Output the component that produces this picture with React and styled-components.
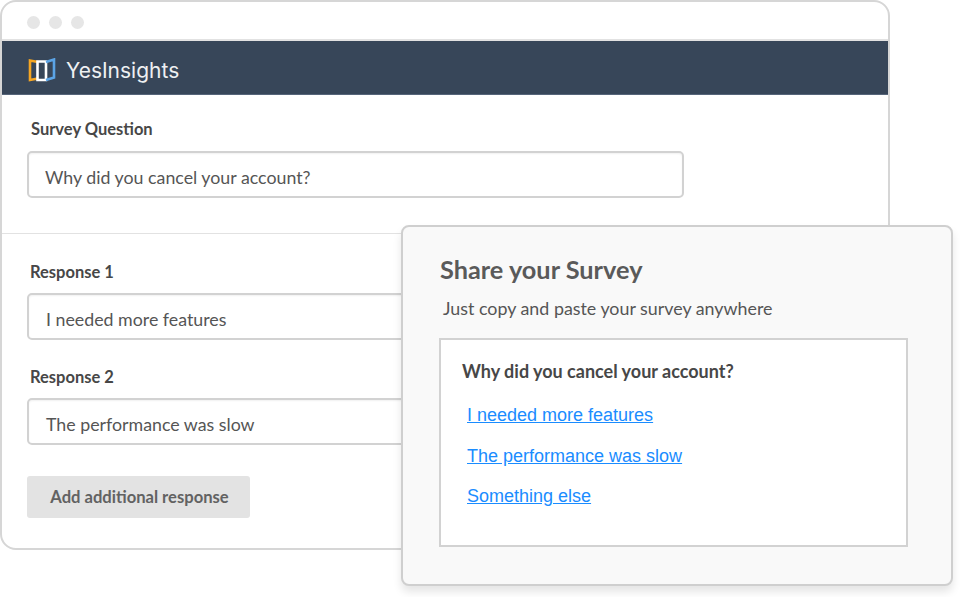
import React from 'react';
import styled, { createGlobalStyle } from 'styled-components';

const GlobalStyle = createGlobalStyle`
  html, body {
    margin: 0;
    padding: 0;
    background: #fff;
  }

  * {
    box-sizing: border-box;
  }
`;

const Page = styled.div`
  position: relative;
  width: 960px;
  height: 597px;
  overflow: hidden;
  font-family: Lato, "Liberation Sans", sans-serif;
  color: #444;
`;

const AppWindow = styled.div`
  width: 890px;
  height: 550px;
  border: 2px solid #d6d6d6;
  border-radius: 16px;
  background: #fff;
  overflow: hidden;
`;

const TitleBar = styled.div`
  display: flex;
  align-items: center;
  gap: 9px;
  height: 39px;
  padding: 3px 0 0 25px;
  border-bottom: 2px solid #e2e2e2;
`;

const Dot = styled.span`
  width: 13px;
  height: 13px;
  border-radius: 50%;
  background: #e6e6e6;
`;

const Brand = styled.div`
  display: flex;
  align-items: center;
  gap: 10px;
  height: 54px;
  padding: 5px 0 0 26px;
  background: #374659;
  border-bottom: 1px solid #56657a;
`;

const BrandName = styled.span`
  font-family: Inter, sans-serif;
  font-size: 21px;
  font-weight: 400;
  color: #eef0f2;
`;

const QuestionSection = styled.section`
  height: 139px;
  padding: 24px 0 0 25px;
  border-bottom: 1px solid #e2e2e2;
`;

const ResponseSection = styled.section`
  padding: 28px 0 0 25px;
`;

const FieldLabel = styled.div`
  margin: 0 0 ${(props) => props.gap || 12}px ${(props) => props.indent || 4}px;
  font-size: 16.5px;
  font-weight: 700;
  line-height: 20px;
  color: #474747;
`;

const TextBox = styled.div`
  display: flex;
  align-items: center;
  width: ${(props) => props.width}px;
  height: 47px;
  margin-bottom: ${(props) => props.after || 0}px;
  padding: 4px 0 0 ${(props) => props.inset}px;
  border: 2px solid #d2d2d2;
  border-radius: 5px;
  background: #fff;
  box-shadow: inset 0 1px 2px rgba(0, 0, 0, 0.06);
  font-size: 17.8px;
  color: #555;
`;

const AddButton = styled.button`
  display: block;
  width: 223px;
  height: 42px;
  margin-top: 31px;
  padding: 0 0 0 2px;
  border: 0;
  border-radius: 3px;
  background: #e3e3e3;
  font-family: inherit;
  font-size: 16.6px;
  font-weight: 700;
  color: #626262;
`;

const SharePanel = styled.div`
  position: absolute;
  left: 401px;
  top: 225px;
  width: 552px;
  height: 361px;
  padding: 26px 44px 0 36px;
  border: 2px solid #cfcfcf;
  border-radius: 8px;
  background: #f9f9f9;
  box-shadow: 0 6px 8px rgba(0, 0, 0, 0.1);
`;

const ShareTitle = styled.h2`
  margin: 0 0 0 1px;
  font-size: 25.3px;
  font-weight: 700;
  line-height: 32px;
  color: #5a5a5a;
`;

const ShareHint = styled.p`
  margin: 11px 0 18px 4px;
  font-size: 17.85px;
  line-height: 24px;
  color: #555;
`;

const EmbedBox = styled.div`
  width: 469px;
  height: 209px;
  padding: 19px 0 0 21px;
  border: 2px solid #d2d2d2;
  background: #fff;
`;

const EmbedQuestion = styled.div`
  font-size: 18px;
  font-weight: 700;
  line-height: 24px;
  color: #474747;
`;

const AnswerList = styled.div`
  display: flex;
  flex-direction: column;
  align-items: flex-start;
  gap: 17.5px;
  margin: 21px 0 0 5px;
`;

const AnswerLink = styled.a`
  font-family: "Liberation Sans", Arial, sans-serif;
  font-size: 18px;
  line-height: 23px;
  color: #1a8cff;
  text-decoration: underline;
`;

function LogoMark() {
  return (
    <svg width="28" height="25" viewBox="0 0 28 25" fill="none" strokeWidth="2.6">
      <path d="M10 4 L2 2.5 V22 L10 20.5" stroke="#f5a623" />
      <path d="M9.5 3.5 H18 V22 H9.5 Z" stroke="#fff" />
      <path d="M18 4 L26 1.5 V19.5 L18 22" stroke="#5ba4e6" />
    </svg>
  );
}

function App() {
  return (
    <Page>
      <GlobalStyle />
      <AppWindow>
        <TitleBar>
          <Dot />
          <Dot />
          <Dot />
        </TitleBar>
        <Brand>
          <LogoMark />
          <BrandName>YesInsights</BrandName>
        </Brand>
        <QuestionSection>
          <FieldLabel>Survey Question</FieldLabel>
          <TextBox width={657} inset={16}>Why did you cancel your account?</TextBox>
        </QuestionSection>
        <ResponseSection>
          <FieldLabel indent={3} gap={11}>Response 1</FieldLabel>
          <TextBox width={400} inset={17} after={27}>I needed more features</TextBox>
          <FieldLabel indent={3} gap={11}>Response 2</FieldLabel>
          <TextBox width={400} inset={17}>The performance was slow</TextBox>
          <AddButton>Add additional response</AddButton>
        </ResponseSection>
      </AppWindow>
      <SharePanel>
        <ShareTitle>Share your Survey</ShareTitle>
        <ShareHint>Just copy and paste your survey anywhere</ShareHint>
        <EmbedBox>
          <EmbedQuestion>Why did you cancel your account?</EmbedQuestion>
          <AnswerList>
            <AnswerLink href="#">I needed more features</AnswerLink>
            <AnswerLink href="#">The performance was slow</AnswerLink>
            <AnswerLink href="#">Something else</AnswerLink>
          </AnswerList>
        </EmbedBox>
      </SharePanel>
    </Page>
  );
}

export default App;
